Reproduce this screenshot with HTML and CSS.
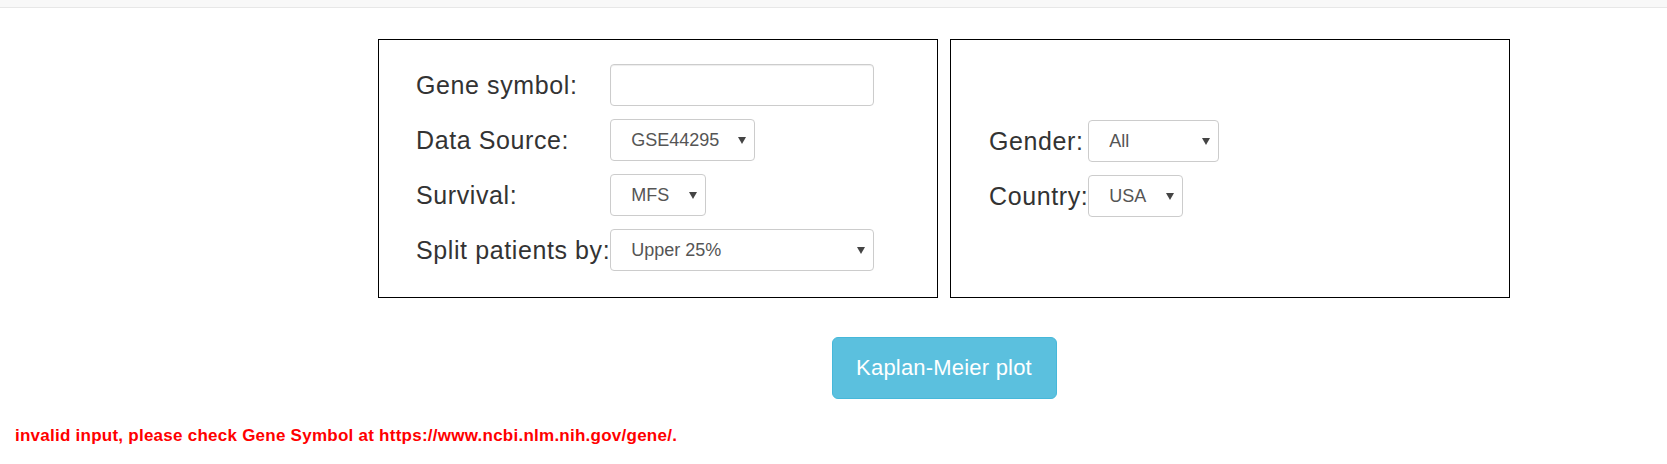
FILE: index.html
```html
<!DOCTYPE html>
<html lang="en">
<head>
    <meta charset="UTF-8">
    <meta name="viewport" content="width=device-width, initial-scale=1.0">
    <title>Kaplan-Meier plot</title>
    <link rel="stylesheet" href="styles.css">
</head>
<body>
    <div class="navbar"></div>

    <div class="main">
        <div class="panels">
            <div class="panel panel-left">
                <label class="field-label" for="gene">Gene symbol:</label>
                <input class="form-control input-gene" id="gene" type="text">

                <label class="field-label" for="source">Data Source:</label>
                <span class="select-wrap">
                    <select class="form-control select-source" id="source">
                        <option>GSE44295</option>
                    </select>
                </span>

                <label class="field-label" for="survival">Survival:</label>
                <span class="select-wrap">
                    <select class="form-control select-survival" id="survival">
                        <option>MFS</option>
                    </select>
                </span>

                <label class="field-label" for="split">Split patients by:</label>
                <span class="select-wrap">
                    <select class="form-control select-split" id="split">
                        <option>Upper 25%</option>
                    </select>
                </span>
            </div>

            <div class="panel panel-right">
                <label class="field-label" for="gender">Gender:</label>
                <span class="select-wrap">
                    <select class="form-control select-gender" id="gender">
                        <option>All</option>
                    </select>
                </span>

                <label class="field-label" for="country">Country:</label>
                <span class="select-wrap">
                    <select class="form-control select-country" id="country">
                        <option>USA</option>
                    </select>
                </span>
            </div>
        </div>

        <div class="actions">
            <button class="btn-plot" type="button">Kaplan-Meier plot</button>
        </div>
    </div>

    <p class="error">invalid input, please check Gene Symbol at https://www.ncbi.nlm.nih.gov/gene/.</p>
</body>
</html>
```

FILE: styles.css
```css
body {
    font-family: "Liberation Sans", Arial, sans-serif;
    background-color: #ffffff;
    color: #333;
    margin: 0;
    padding: 0;
}
.navbar {
    height: 7px;
    background-color: #f8f8f8;
    border-bottom: 1px solid #e7e7e7;
}
.main {
    width: 1132px;
    margin-left: 378px;
    padding-top: 31px;
}
.panels {
    display: flex;
    gap: 12px;
}
.panel {
    box-sizing: border-box;
    width: 560px;
    border: 1px solid #000;
    display: grid;
    grid-template-columns: max-content auto;
    row-gap: 13px;
    align-items: center;
    justify-items: start;
}
.panel-left {
    padding: 24px 0 26px 37px;
}
.panel-right {
    padding: 0 0 0 38px;
    align-content: center;
}
.field-label {
    font-size: 25px;
    letter-spacing: 0.6px;
    color: #333;
}
.form-control {
    box-sizing: border-box;
    height: 42px;
    border: 1px solid #ccc;
    border-radius: 4px;
    background-color: #fff;
    box-shadow: inset 0 1px 1px rgba(0, 0, 0, 0.075);
    font-family: "Liberation Sans", Arial, sans-serif;
    font-size: 18px;
    color: #555;
    margin: 0;
}
select.form-control {
    appearance: none;
    -webkit-appearance: none;
    padding: 0 24px 0 20px;
    box-shadow: none;
}
.select-wrap {
    position: relative;
    display: inline-block;
}
.select-wrap::after {
    content: "";
    position: absolute;
    right: 9px;
    top: 18px;
    border-left: 4px solid transparent;
    border-right: 4px solid transparent;
    border-top: 7px solid #444;
    pointer-events: none;
}
.input-gene {
    width: 264px;
}
.select-source {
    width: 145px;
}
.select-survival {
    width: 96px;
}
.select-split {
    width: 264px;
}
.select-gender {
    width: 131px;
}
.select-country {
    width: 95px;
}
.actions {
    display: flex;
    justify-content: center;
    padding-top: 39px;
}
.btn-plot {
    box-sizing: border-box;
    width: 225px;
    height: 62px;
    background-color: #5bc0de;
    border: 1px solid #46b8da;
    border-radius: 6px;
    color: #fff;
    font-family: "Liberation Sans", Arial, sans-serif;
    font-size: 22px;
    letter-spacing: 0.2px;
    cursor: pointer;
}
.error {
    margin: 27px 0 0 15px;
    color: #ff0000;
    font-weight: bold;
    font-size: 17px;
    letter-spacing: 0.25px;
    line-height: 19px;
}
```
